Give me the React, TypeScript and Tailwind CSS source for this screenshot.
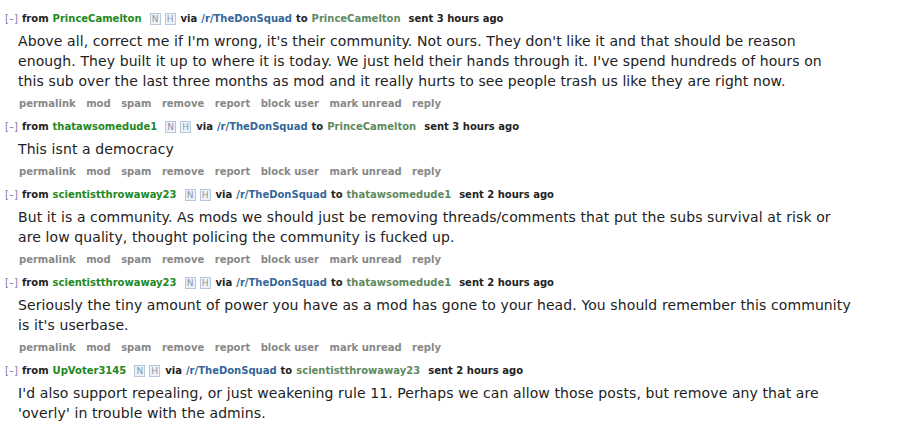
const messages = [
  {
    from: "PrinceCamelton",
    to: "PrinceCamelton",
    sent: "sent 3 hours ago",
    lines: [
      "Above all, correct me if I'm wrong, it's their community. Not ours. They don't like it and that should be reason",
      "enough. They built it up to where it is today. We just held their hands through it. I've spend hundreds of hours on",
      "this sub over the last three months as mod and it really hurts to see people trash us like they are right now.",
    ],
  },
  {
    from: "thatawsomedude1",
    to: "PrinceCamelton",
    sent: "sent 3 hours ago",
    lines: ["This isnt a democracy"],
  },
  {
    from: "scientistthrowaway23",
    to: "thatawsomedude1",
    sent: "sent 2 hours ago",
    lines: [
      "But it is a community. As mods we should just be removing threads/comments that put the subs survival at risk or",
      "are low quality, thought policing the community is fucked up.",
    ],
  },
  {
    from: "scientistthrowaway23",
    to: "thatawsomedude1",
    sent: "sent 2 hours ago",
    lines: [
      "Seriously the tiny amount of power you have as a mod has gone to your head. You should remember this community",
      "is it's userbase.",
    ],
  },
  {
    from: "UpVoter3145",
    to: "scientistthrowaway23",
    sent: "sent 2 hours ago",
    lines: [
      "I'd also support repealing, or just weakening rule 11. Perhaps we can allow those posts, but remove any that are",
      "'overly' in trouble with the admins.",
    ],
    noButtons: true,
  },
];

const buttons = ["permalink", "mod", "spam", "remove", "report", "block user", "mark unread", "reply"];

const Badge = ({ letter }: { letter: string }) => (
  <span className="inline-flex h-[12px] w-[11px] items-center justify-center border border-[#b8c8dc] bg-[#eef2f8] text-[9px] font-normal leading-none text-[#8a96a6]">
    {letter}
  </span>
);

const Message = ({ m }: { m: (typeof messages)[number] }) => (
  <div className="flex flex-col">
    <div className="flex h-[16px] items-center whitespace-nowrap text-[10px] font-bold leading-none text-[#222]">
      <span className="ml-[5px] w-[17px] font-normal text-[#7a7fa8]">
        [<span className="text-[#888]">–</span>]
      </span>
      <span>from</span>
      <span className="ml-[4px] text-[#228822]">{m.from}</span>
      <span className="ml-[8px] flex gap-[4px]">
        <Badge letter="N" />
        <Badge letter="H" />
      </span>
      <span className="ml-[5px]">via</span>
      <span className="ml-[4px] text-[#336699]">/r/TheDonSquad</span>
      <span className="ml-[4px]">to</span>
      <span className="ml-[4px] text-[#5f8a5f]">{m.to}</span>
      <span className="ml-[8px]">{m.sent}</span>
    </div>
    <div className="ml-[18px] mt-[4px] text-[14px] leading-[20px] tracking-[0.1px] text-[#222]">
      {m.lines.map((l, i) => (
        <div key={i} className="whitespace-nowrap">
          {l}
        </div>
      ))}
    </div>
    {!m.noButtons && (
      <div className="ml-[19px] mt-[6px] flex h-[14px] items-center gap-[10.5px] whitespace-nowrap text-[10px] font-bold leading-none text-[#888]">
        {buttons.map((b) => (
          <span key={b}>{b}</span>
        ))}
      </div>
    )}
  </div>
);

export default function App() {
  return (
    <div
      className="flex min-h-[426px] w-[907px] flex-col gap-[8px] bg-white pt-[11px]"
      style={{ fontFamily: "'DejaVu Sans', Verdana, sans-serif" }}
    >
      {messages.map((m, i) => (
        <Message key={i} m={m} />
      ))}
    </div>
  );
}
